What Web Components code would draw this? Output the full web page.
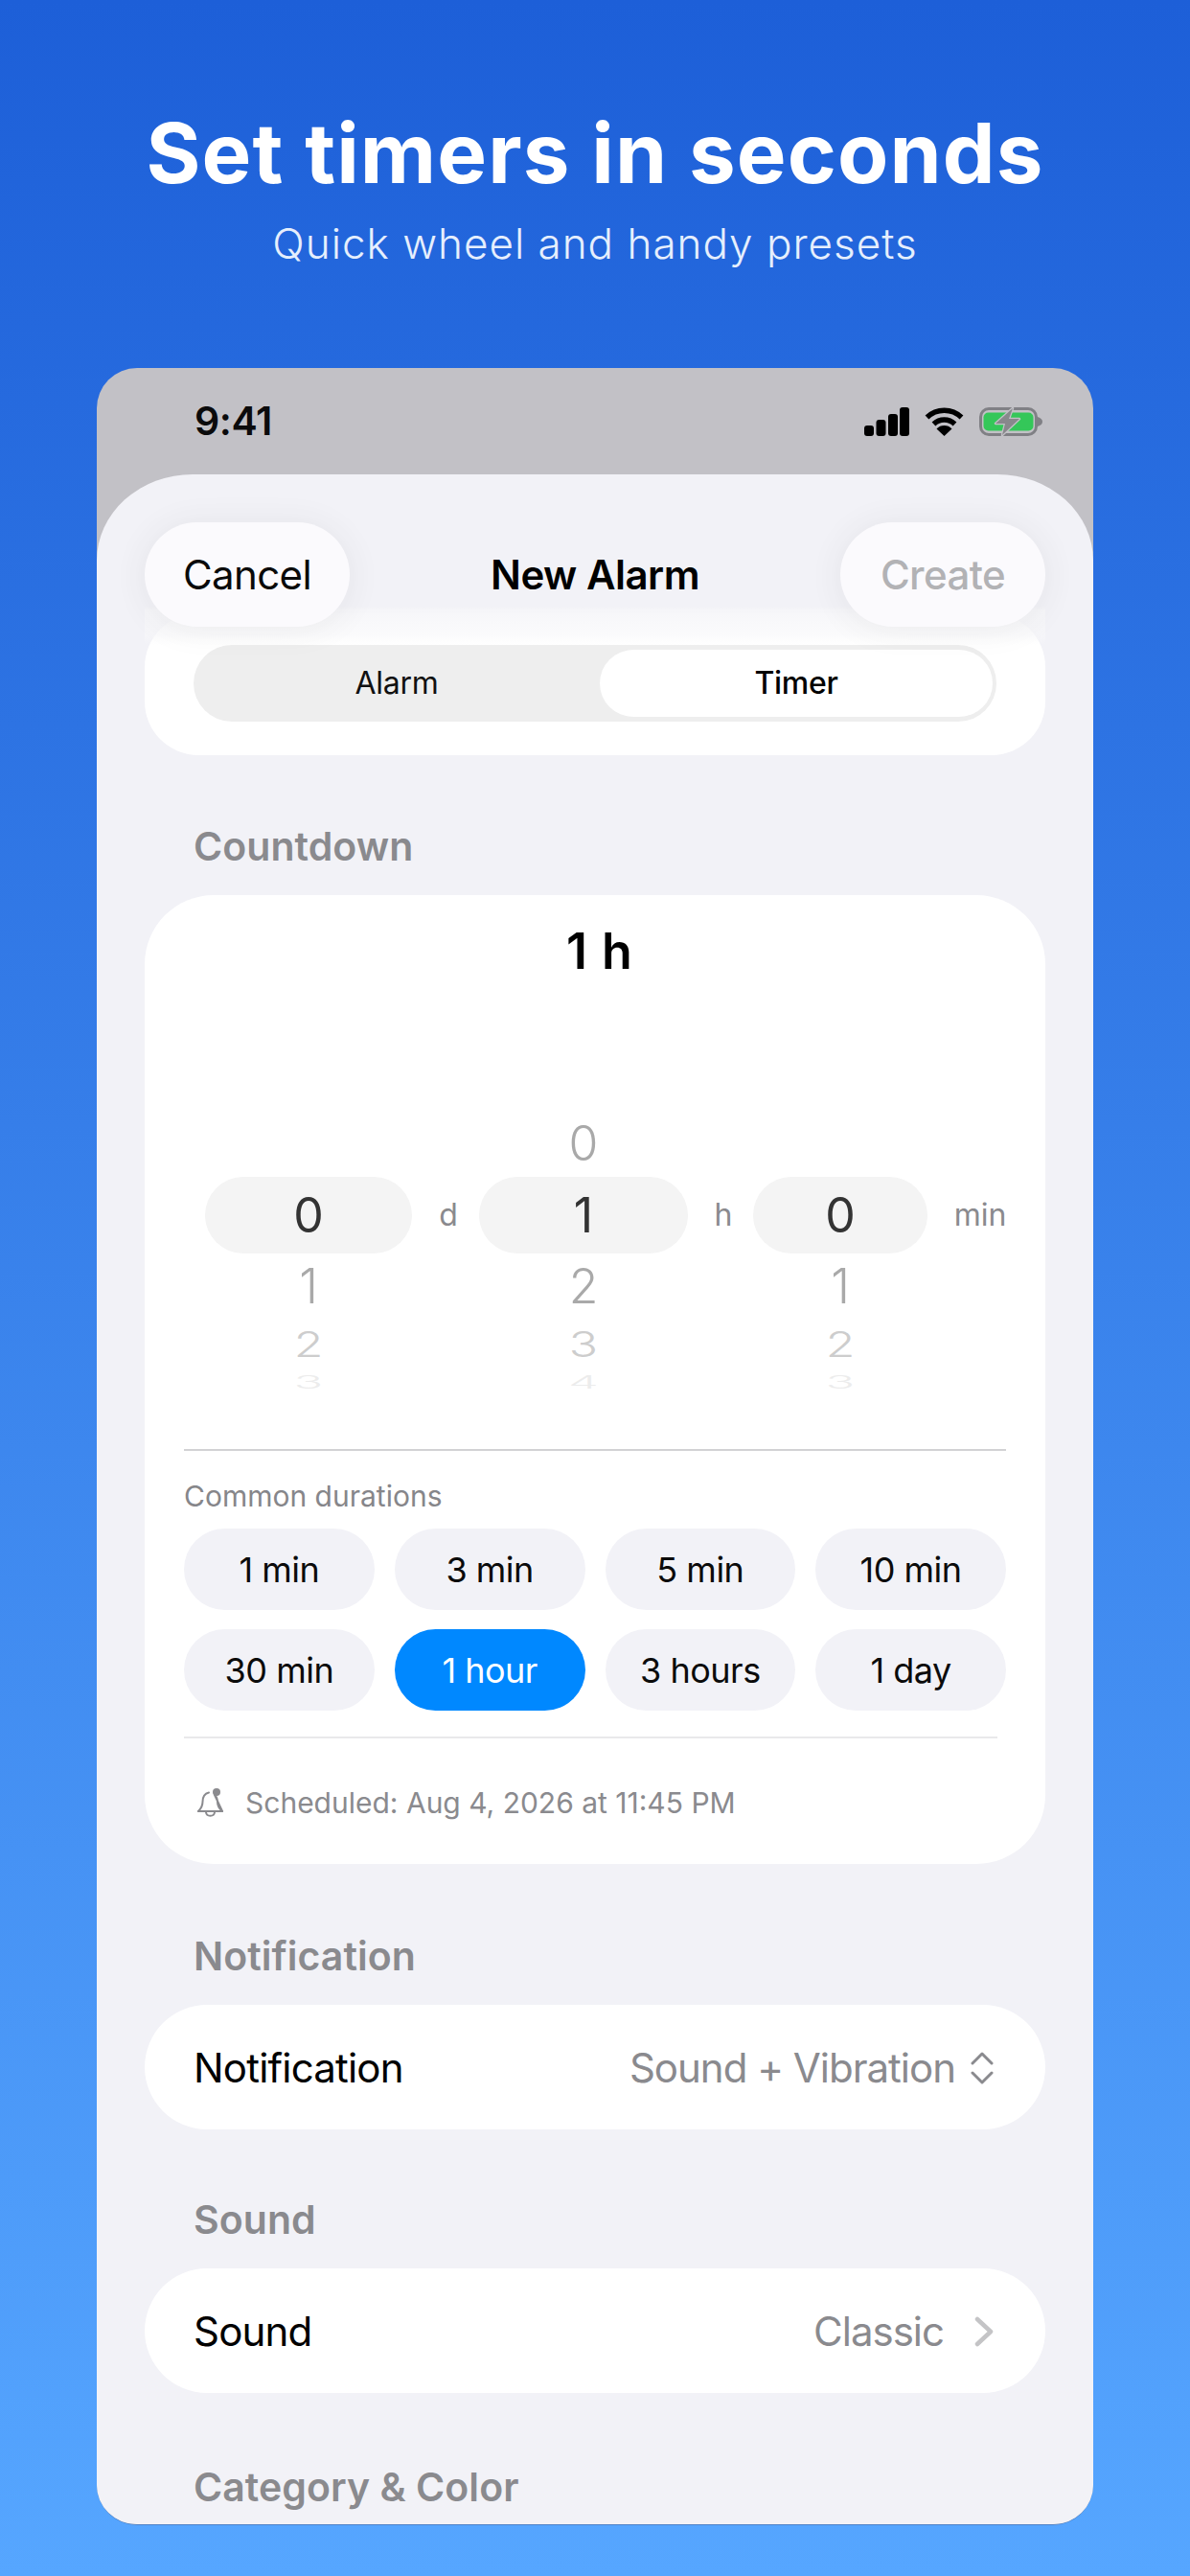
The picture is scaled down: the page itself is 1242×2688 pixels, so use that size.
<!DOCTYPE html>
<html lang="en">
<head>
<meta charset="utf-8">
<title>Set timers in seconds</title>
<style>
    html, body { margin: 0; padding: 0; }
    body {
        width: 1242px;
        height: 2688px;
        overflow: hidden;
        font-family: Inter, "Noto Sans", sans-serif;
        background: linear-gradient(180deg, #1d5fd8 0%, #56a6ff 100%);
    }
</style>
</head>
<body>
<promo-header heading="Set timers in seconds" sub="Quick wheel and handy presets"></promo-header>
<phone-frame>
    <status-bar></status-bar>
    <alarm-sheet>
        <sheet-nav></sheet-nav>
        <segment-card></segment-card>
        <section-label style="margin-top:70px">Countdown</section-label>
        <countdown-card></countdown-card>
        <section-label style="margin-top:71px">Notification</section-label>
        <setting-row label="Notification" value="Sound + Vibration" icon="updown"></setting-row>
        <section-label style="margin-top:69px">Sound</section-label>
        <setting-row label="Sound" value="Classic" icon="chevron"></setting-row>
        <section-label style="margin-top:73px">Category &amp; Color</section-label>
    </alarm-sheet>
</phone-frame>

<script>
class ShadowBase extends HTMLElement {
    constructor() {
        super();
        this.attachShadow({ mode: 'open' });
    }
    connectedCallback() {
        this.shadowRoot.innerHTML = this.render();
    }
}

class PromoHeader extends ShadowBase {
    render() {
        return `
            <style>
                :host { display: block; height: 384px; padding-top: 110px; box-sizing: border-box; text-align: center; color: #fff; }
                h1 { margin: 0; font: 700 87px/100px Inter, sans-serif; letter-spacing: 1.1px; }
                p { margin: 14px 0 0; font: 300 44px/60px Inter, sans-serif; letter-spacing: 1px; color: #e6effd; }
            </style>
            <h1>${this.getAttribute('heading')}</h1>
            <p>${this.getAttribute('sub')}</p>
        `;
    }
}

class PhoneFrame extends ShadowBase {
    render() {
        return `
            <style>
                :host {
                    display: block;
                    width: 1040px;
                    height: 2251px;
                    margin-left: 101px;
                    border-radius: 42px;
                    overflow: hidden;
                    background: #c2c1c6;
                    border-bottom: 1px solid #4f82c6;
                    box-sizing: border-box;
                }
            </style>
            <slot></slot>
        `;
    }
}

class StatusBar extends ShadowBase {
    render() {
        return `
            <style>
                :host {
                    display: flex;
                    align-items: center;
                    justify-content: space-between;
                    height: 111px;
                    padding: 0 53px 0 102px;
                    box-sizing: border-box;
                }
                span { font: 600 41px/1 Inter, sans-serif; color: #0b0b0c; letter-spacing: -0.4px; }
                div { display: flex; align-items: center; gap: 16px; margin-top: 1px; }
                svg { display: block; }
            </style>
            <span>9:41</span>
            <div>
                <svg width="47" height="30" viewBox="0 0 47 30">
                    <rect x="0" y="19" width="10" height="11" rx="3"/>
                    <rect x="12.5" y="13" width="10" height="17" rx="3"/>
                    <rect x="25" y="7" width="10" height="23" rx="3"/>
                    <rect x="37" y="0" width="10" height="30" rx="3"/>
                </svg>
                <svg width="41" height="30" viewBox="0 0 41 30" fill="none" stroke="#000" stroke-width="5.5">
                    <path d="M2.5 10.5 A26 26 0 0 1 38.5 10.5"/>
                    <path d="M9.5 17.5 A16 16 0 0 1 31.5 17.5"/>
                    <path d="M20.5 30 L12.5 22.5 A11 11 0 0 1 28.5 22.5 Z" fill="#000" stroke="none"/>
                </svg>
                <svg width="66" height="32" viewBox="0 0 66 32">
                    <rect x="1.5" y="2.5" width="58" height="27" rx="8.5" fill="none" stroke="#808085" stroke-width="3"/>
                    <rect x="4.5" y="6.5" width="52" height="19" rx="5" fill="#34c759"/>
                    <path d="M61 11 C64.5 12 66 14 66 16 C66 18 64.5 20 61 21 Z" fill="#808085"/>
                    <path d="M35 2 L17 18 H27 L24 30 L42 13 H31 Z" fill="#88888c" stroke="#c2c1c6" stroke-width="2.5" paint-order="stroke" stroke-linejoin="round"/>
                </svg>
            </div>
        `;
    }
}

class AlarmSheet extends ShadowBase {
    render() {
        return `
            <style>
                :host {
                    display: block;
                    height: 2200px;
                    padding: 50px 50px 0;
                    box-sizing: border-box;
                    background: #f2f2f7;
                    border-radius: 100px 100px 0 0 / 90px 90px 0 0;
                }
            </style>
            <slot></slot>
        `;
    }
}

class SheetNav extends ShadowBase {
    render() {
        return `
            <style>
                :host {
                    display: grid;
                    grid-template-columns: 1fr auto 1fr;
                    align-items: start;
                    position: relative;
                    z-index: 1;
                    height: 150px;
                    margin-bottom: -55px;
                    background: linear-gradient(180deg, rgba(242,242,247,0) 88px, rgba(246,246,249,.95) 92px, rgba(248,248,250,.6) 118px, rgba(255,255,255,0) 128px);
                }
                .pill {
                    width: 214px;
                    height: 109px;
                    border-radius: 55px;
                    background: #fbfafd;
                    box-shadow: 0 2px 34px rgba(60,60,70,.08);
                    display: flex;
                    align-items: center;
                    justify-content: center;
                    font: 400 42px/1 Inter, sans-serif;
                    letter-spacing: -0.6px;
                    color: #0a0a0a;
                }
                .pill.off { justify-self: end; color: #b2b2b5; font-weight: 500; }
                b { font: 600 42px/109px Inter, sans-serif; letter-spacing: -0.5px; color: #000; }
            </style>
            <div class="pill">Cancel</div>
            <b>New Alarm</b>
            <div class="pill off">Create</div>
        `;
    }
}

class SegmentCard extends ShadowBase {
    render() {
        return `
            <style>
                :host {
                    display: block;
                    height: 148px;
                    padding: 33px 51px 0;
                    box-sizing: border-box;
                    border-radius: 56px;
                    background: #fff;
                }
                .track {
                    display: grid;
                    grid-template-columns: 424px 410px;
                    height: 80px;
                    padding: 5px 4px 5px 0;
                    box-sizing: border-box;
                    border-radius: 40px;
                    background: #eeeeee;
                    font: 400 32px/70px Inter, sans-serif;
                    letter-spacing: -0.3px;
                    text-align: center;
                    color: #111;
                }
                .on { background: #fff; border-radius: 35px; font-weight: 500; color: #000; }
            </style>
            <div class="track">
                <div>Alarm</div>
                <div class="on">Timer</div>
            </div>
        `;
    }
}

class SectionLabel extends ShadowBase {
    render() {
        return `
            <style>
                :host {
                    display: block;
                    padding-left: 51px;
                    margin-bottom: 26px;
                    font: 600 41px/50px Inter, sans-serif;
                    letter-spacing: 0.05px;
                    color: #8a8a8e;
                }
            </style>
            <slot></slot>
        `;
    }
}

class WheelColumn extends ShadowBase {
    render() {
        const values = this.getAttribute('values').split(',');
        const rows = values.map((v, i) => `<div class="r r${i}"><span>${v}</span></div>`).join('');
        return `
            <style>
                :host { display: flex; align-items: flex-start; }
                .col { width: var(--pill); }
                .r { display: flex; align-items: center; justify-content: center; font: 300 50px/1 Inter, sans-serif; }
                .r span { display: block; }
                .r0 { height: 70px; color: #a9a9a9; }
                .r1 { height: 80px; color: #333; background: #f4f4f4; border-radius: 40px; font-weight: 400; }
                .r2 { height: 68px; color: #a9a9a9; }
                .r3 { height: 54px; color: #cdcdcd; }
                .r3 span { transform: scaleY(.74); }
                .r4 { height: 26px; color: #ececec; overflow: hidden; }
                .r4 span { transform: scaleY(.36); }
                .unit {
                    width: var(--unit);
                    box-sizing: border-box;
                    padding-left: var(--shift, 0);
                    margin-top: 70px;
                    font: 400 32px/80px Inter, sans-serif;
                    text-align: center;
                    color: #8a8a8e;
                }
            </style>
            <div class="col">${rows}</div>
            <div class="unit">${this.getAttribute('unit')}</div>
        `;
    }
}

class DurationChip extends ShadowBase {
    render() {
        return `
            <style>
                :host {
                    display: flex;
                    align-items: center;
                    justify-content: center;
                    height: 85px;
                    border-radius: 43px;
                    background: #f2f2f7;
                    color: #0b0b0b;
                    font: 400 36px/1 Inter, sans-serif;
                    letter-spacing: -0.5px;
                }
                :host([selected]) { background: #0088ff; color: #fff; }
            </style>
            <slot></slot>
        `;
    }
}

class CountdownCard extends ShadowBase {
    render() {
        return `
            <style>
                :host {
                    display: block;
                    height: 1011px;
                    padding: 29px 41px 0;
                    box-sizing: border-box;
                    border-radius: 72px;
                    background: #fff;
                }
                .now { height: 60px; padding-left: 10px; font: 600 52px/60px Inter, sans-serif; letter-spacing: 1px; text-align: center; color: #000; }
                .wheels { display: flex; height: 298px; margin-top: 135px; padding-left: 22px; overflow: hidden; }
                hr { margin: 0; border: 0; height: 2px; background: #d2d2d4; }
                .top { margin-top: 56px; }
                .common { margin-top: 27px; font: 400 30px/40px Inter, sans-serif; color: #86868a; }
                .chips { display: grid; grid-template-columns: repeat(4, 1fr); gap: 20px 21px; margin-top: 14px; }
                .low { margin-top: 27px; width: 849px; background: #e9e9eb; }
                .when { display: flex; align-items: center; gap: 21px; margin-top: 47px; padding-left: 13px; font: 400 30px/40px Inter, sans-serif; color: #8a8a8e; }
                svg { display: block; }
            </style>
            <div class="now">1 h</div>
            <div class="wheels">
                <wheel-column style="--pill:216px;--unit:70px;--shift:6px" values=",0,1,2,3" unit="d"></wheel-column>
                <wheel-column style="--pill:218px;--unit:68px;--shift:6px" values="0,1,2,3,4" unit="h"></wheel-column>
                <wheel-column style="--pill:182px;--unit:110px" values=",0,1,2,3" unit="min"></wheel-column>
            </div>
            <hr class="top">
            <div class="common">Common durations</div>
            <div class="chips">
                <duration-chip>1 min</duration-chip>
                <duration-chip>3 min</duration-chip>
                <duration-chip>5 min</duration-chip>
                <duration-chip>10 min</duration-chip>
                <duration-chip>30 min</duration-chip>
                <duration-chip selected>1 hour</duration-chip>
                <duration-chip>3 hours</duration-chip>
                <duration-chip>1 day</duration-chip>
            </div>
            <hr class="low">
            <div class="when">
                <svg width="30" height="32" viewBox="0 0 30 32" fill="none" stroke="#8a8a8e" stroke-width="2" stroke-linecap="round" stroke-linejoin="round">
                    <path d="M2 25 C5 22 6.5 20 6.5 15 C6.5 10 9 6.5 13 5.5 M19 8 C21.5 10 22 12.5 22 15.5 C22 20 24 22.5 27 25 Z"/>
                    <path d="M2 25 H27"/>
                    <path d="M10 26 C10.5 31 18.5 31 19 26"/>
                    <circle cx="21" cy="5" r="4" fill="#8a8a8e" stroke="none"/>
                </svg>
                <span>Scheduled: Aug 4, 2026 at 11:45 PM</span>
            </div>
        `;
    }
}

class SettingRow extends ShadowBase {
    render() {
        const icons = {
            updown: `<svg width="24" height="34" viewBox="0 0 24 34" fill="none" stroke="#8a8a8e" stroke-width="3" stroke-linecap="round" stroke-linejoin="round"><path d="M2 12 L12 2 L22 12"/><path d="M2 22 L12 32 L22 22"/></svg>`,
            chevron: `<svg width="20" height="32" viewBox="0 0 20 32" fill="none" stroke="#c4c4c6" stroke-width="4.5" stroke-linecap="round" stroke-linejoin="round"><path d="M3 3 L17 16 L3 29"/></svg>`
        };
        const kind = this.getAttribute('icon');
        return `
            <style>
                :host {
                    display: flex;
                    align-items: center;
                    justify-content: space-between;
                    height: 130px;
                    padding: 2px 54px 0 51px;
                    box-sizing: border-box;
                    border-radius: 65px;
                    background: #fff;
                    font: 400 42px/1 Inter, sans-serif;
                    letter-spacing: -0.8px;
                    color: #000;
                }
                .v { display: flex; align-items: center; gap: ${kind === 'updown' ? 16 : 32}px; letter-spacing: -1px; color: #8a8a8e; }
                svg { display: block; }
            </style>
            <span>${this.getAttribute('label')}</span>
            <span class="v">${this.getAttribute('value')}${icons[kind]}</span>
        `;
    }
}

customElements.define('promo-header', PromoHeader);
customElements.define('phone-frame', PhoneFrame);
customElements.define('status-bar', StatusBar);
customElements.define('alarm-sheet', AlarmSheet);
customElements.define('sheet-nav', SheetNav);
customElements.define('segment-card', SegmentCard);
customElements.define('section-label', SectionLabel);
customElements.define('wheel-column', WheelColumn);
customElements.define('duration-chip', DurationChip);
customElements.define('countdown-card', CountdownCard);
customElements.define('setting-row', SettingRow);
</script>
</body>
</html>
